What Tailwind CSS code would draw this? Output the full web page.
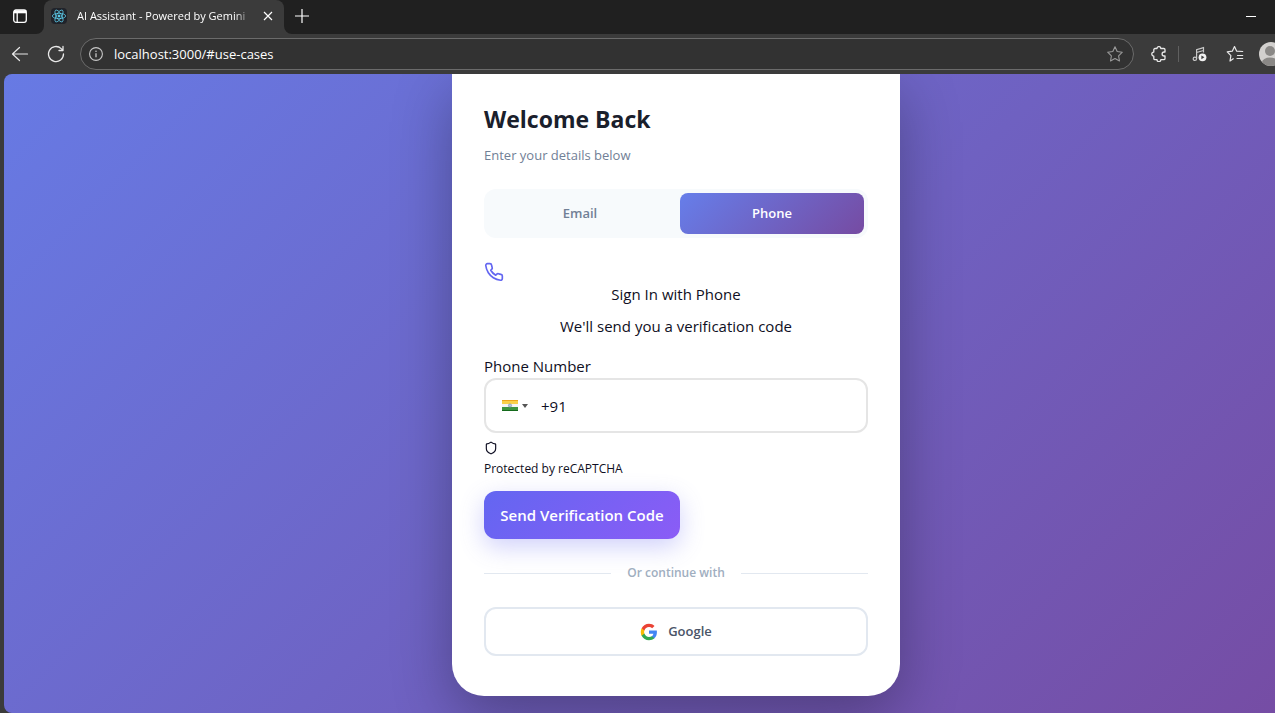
<!DOCTYPE html>
<html lang="en">

<head>
    <meta charset="UTF-8">
    <meta name="viewport" content="width=device-width, initial-scale=1.0">
    <title>AI Assistant - Powered by Gemini</title>
    <script src="https://cdn.jsdelivr.net/npm/@tailwindcss/browser@4"></script>
</head>

<body class="flex flex-col min-h-screen bg-[#3b3b3b] font-['Open_Sans','Noto_Sans',sans-serif]">

    <!-- Tab strip -->
    <header class="flex h-[34px] bg-[#202020] text-white">
        <button type="button" aria-label="Tab actions" class="w-11 flex items-center pl-3 pb-[2px] bg-[#202020]">
            <svg class="w-4 h-4" viewBox="0 0 16 16" fill="none" stroke="currentColor" stroke-width="1.3">
                <rect x="1.7" y="2" width="12.6" height="12.3" rx="2.2" />
                <path d="M2 3.8h12" stroke-width="3" />
                <path d="M5.2 4v10" />
            </svg>
        </button>
        <div class="relative w-60 flex items-center bg-[#3b3b3b] rounded-t-lg pl-[7px] pr-2 pb-[2px]">
            <span class="w-4 h-4 shrink-0 flex items-center justify-center bg-[#20232a] rounded-sm">
                <svg class="w-4 h-4" viewBox="0 0 24 24" fill="none" stroke="#61dafb" stroke-opacity=".8" stroke-width="1.3">
                    <circle cx="12" cy="12" r="1.6" fill="#61dafb" />
                    <ellipse cx="12" cy="12" rx="10" ry="4" />
                    <ellipse cx="12" cy="12" rx="10" ry="4" transform="rotate(60 12 12)" />
                    <ellipse cx="12" cy="12" rx="10" ry="4" transform="rotate(120 12 12)" />
                </svg>
            </span>
            <span class="ml-[10px] w-44 overflow-hidden whitespace-nowrap text-[11px] leading-4 mask-r-from-90%">AI Assistant - Powered by Gemini</span>
            <button type="button" aria-label="Close tab" class="w-4 h-4 ml-2 flex items-center justify-center">
                <svg class="w-[10px] h-[10px]" viewBox="0 0 10 10" stroke="currentColor" stroke-width="1.2">
                    <path d="M1 1l8 8M9 1L1 9" />
                </svg>
            </button>
            <svg class="absolute -left-2 bottom-0 w-2 h-2" viewBox="0 0 8 8" fill="#3b3b3b"><path d="M8 0v8H0a8 8 0 0 0 8-8z" /></svg>
            <svg class="absolute -right-2 bottom-0 w-2 h-2" viewBox="0 0 8 8" fill="#3b3b3b"><path d="M0 0v8h8a8 8 0 0 1-8-8z" /></svg>
        </div>
        <button type="button" aria-label="New tab" class="w-9 flex items-center justify-center pb-[2px]">
            <svg class="w-4 h-4" viewBox="0 0 16 16" stroke="currentColor" stroke-width="1.2">
                <path d="M8 1v14M1 8h14" />
            </svg>
        </button>
        <button type="button" aria-label="Minimize" class="ml-auto w-12 flex items-center justify-center pb-[2px]">
            <svg class="w-[10px] h-[10px]" viewBox="0 0 10 10" stroke="currentColor"><path d="M0 5.5h10" /></svg>
        </button>
    </header>

    <!-- Toolbar -->
    <nav class="flex items-center h-10 pl-1 overflow-hidden text-[#e8e8e8]">
        <button type="button" aria-label="Back" class="w-8 h-8 flex items-center justify-center">
            <svg class="w-[18px] h-[18px]" viewBox="0 0 18 18" fill="none" stroke="currentColor" stroke-width="1.2" stroke-linecap="round" stroke-linejoin="round">
                <path d="M8.500 2.500L1.500 9l7 6.500M1.500 9H16.500" />
            </svg>
        </button>
        <button type="button" aria-label="Refresh" class="w-8 h-8 ml-1 flex items-center justify-center">
            <svg class="w-[18px] h-[18px]" viewBox="0 0 18 18" fill="none" stroke="currentColor" stroke-width="1.3" stroke-linecap="round" stroke-linejoin="round">
                <path d="M16.500 9a7.500 7.500 0 1 1-2.300-5.400L16 5.400M16 1.500v4h-4" />
            </svg>
        </button>
        <div class="flex flex-1 items-center h-8 ml-2 pl-2 pr-[10px] rounded-full border border-[#6b6b6b] bg-[#323232]">
            <svg class="w-[14px] h-[14px] shrink-0" viewBox="0 0 14 14" fill="none" stroke="#c8c8c8" stroke-width="1.1">
                <circle cx="7" cy="7" r="6.400" />
                <path d="M7 6.200v4" stroke-width="1.300" />
                <circle cx="7" cy="4.200" r=".5" fill="#c8c8c8" stroke-width=".5" />
            </svg>
            <input type="text" aria-label="Address" value="localhost:3000/#use-cases" class="flex-1 ml-[11px] text-[13px] leading-5 text-white bg-transparent outline-none">
            <svg class="w-4 h-4 shrink-0" viewBox="0 0 16 16" fill="none" stroke="#9a9a9a" stroke-width="1.100" stroke-linejoin="round">
                <path d="M8 .8l2.200 4.700 5.100.7-3.700 3.600.9 5.200L8 12.500 3.500 15l.9-5.200L.7 6.200l5.100-.7z" />
            </svg>
        </div>
        <button type="button" aria-label="Extensions" class="w-8 h-8 ml-[9px] flex items-center justify-center">
            <svg class="w-4 h-4" viewBox="0 0 16 16" fill="none" stroke="currentColor" stroke-width="1.300" stroke-linejoin="round">
                <path d="M4 2.500H6a1.900 1.900 0 0 1 3.800 0H12.800a1.200 1.200 0 0 1 1.200 1.200V6h-.9a2 2 0 0 0 0 4h.9v2.500a1.200 1.200 0 0 1-1.200 1.200H9.800a1.900 1.900 0 0 1-3.800 0H4a1.200 1.200 0 0 1-1.200-1.200V10.100a2 2 0 0 1 0-4V3.700A1.200 1.200 0 0 1 4 2.500z" />
            </svg>
        </button>
        <span class="w-px h-4 mx-[3px] bg-[#606060]"></span>
        <button type="button" aria-label="Media controls" class="w-8 h-8 ml-[2px] flex items-center justify-center">
            <svg class="w-4 h-4" viewBox="0 0 16 16" fill="none" stroke="#c8c8c8" stroke-width="1.200">
                <circle cx="2.900" cy="12.800" r="1.700" />
                <path d="M4.600 12.800V3.600l6.900-2v5M4.600 6.500l6.900-2" />
                <circle cx="10.500" cy="11.300" r="3.900" fill="#f2f2f2" stroke="none" />
                <path d="M9.400 9.400v3.800l3-1.900z" fill="#3b3b3b" stroke="none" />
            </svg>
        </button>
        <button type="button" aria-label="Favorites" class="w-8 h-8 ml-[3px] flex items-center justify-center">
            <svg class="w-[18px] h-[18px]" viewBox="0 0 18 18" fill="none" stroke="currentColor" stroke-width="1.200" stroke-linejoin="round" stroke-linecap="round">
                <path d="M7.300 13.800L4 16l.9-5.400L1.200 6.900l5.100-.7 2.200-4.700 2.200 4.700 6 .3M11.500 10.500h5.200M11 13.500h5.700" />
            </svg>
        </button>
        <button type="button" aria-label="Profile" class="w-6 h-6 ml-2 -mr-2 shrink-0 rounded-full overflow-hidden">
            <svg class="w-6 h-6" viewBox="0 0 24 24">
                <rect width="24" height="24" fill="#d2d0ce" />
                <circle cx="11" cy="9" r="5" fill="#8a8886" />
                <ellipse cx="11" cy="20.500" rx="8" ry="5" fill="#8a8886" />
            </svg>
        </button>
    </nav>

    <!-- Sign in screen -->
    <main class="flex-1 ml-1 pl-[73px] rounded-l-lg overflow-hidden bg-[linear-gradient(135deg,#677ae4,#764ba2)] bg-size-[calc(100%+73px)_100%]">
        <section class="w-full max-w-md mx-auto mb-[17px] px-8 pt-[27px] pb-10 bg-white rounded-b-[32px] shadow-[0_20px_60px_rgba(0,0,0,0.3)] text-[#0f0f23]">
            <h1 class="text-[23px] leading-9 font-bold text-[#1a202c]">Welcome Back</h1>
            <p class="mt-2 text-[13px] leading-5 text-[#718096]">Enter your details below</p>

            <div class="grid grid-cols-2 gap-2 mt-6 p-1 rounded-xl bg-[#f7fafc] text-[13px] font-semibold">
                <button type="button" class="h-[41px] rounded-lg text-[#718096]">Email</button>
                <button type="button" class="h-[41px] rounded-lg text-white bg-[linear-gradient(135deg,#667eea,#764ba2)]">Phone</button>
            </div>

            <svg class="w-5 h-5 mt-6" viewBox="0 0 24 24" fill="none" stroke="#6366f1" stroke-width="2" stroke-linecap="round" stroke-linejoin="round">
                <path d="M22 16.920v3a2 2 0 0 1-2.180 2 19.790 19.790 0 0 1-8.630-3.070 19.500 19.500 0 0 1-6-6 19.790 19.790 0 0 1-3.070-8.670A2 2 0 0 1 4.110 2h3a2 2 0 0 1 2 1.720 12.840 12.840 0 0 0 .7 2.810 2 2 0 0 1-.45 2.110L8.090 9.910a16 16 0 0 0 6 6l1.270-1.270a2 2 0 0 1 2.110-.45 12.840 12.840 0 0 0 2.810.7A2 2 0 0 1 22 16.920z" />
            </svg>
            <h2 class="text-center text-[15px] leading-6">Sign In with Phone</h2>
            <p class="mt-2 text-center text-[15px] leading-6">We'll send you a verification code</p>

            <form>
                <label for="phone" class="block mt-4 text-[15px] leading-6">Phone Number</label>
                <div class="flex items-center h-[55px] px-4 border-2 border-[#e5e5e5] rounded-xl">
                    <button type="button" aria-label="Country: India" class="flex items-center gap-1">
                        <svg class="w-4 h-[11px]" viewBox="0 0 16 11">
                            <rect width="16" height="11" fill="#f4f4f4" />
                            <rect width="16" height="4" fill="#f8d04a" />
                            <rect width="16" height="1" fill="#eda61c" />
                            <rect y="7" width="16" height="4" fill="#3c9440" />
                            <rect y="10" width="16" height="1" fill="#146a1c" />
                            <circle cx="8" cy="5.500" r="1.600" fill="#b5c6d8" stroke="#7d91b0" stroke-width=".7" />
                        </svg>
                        <svg class="w-[6px] h-1" viewBox="0 0 6 4" fill="#555555"><path d="M0 0h6L3 4z" /></svg>
                    </button>
                    <input type="tel" id="phone" value="+91" class="flex-1 ml-[13px] text-[15px] leading-6 bg-transparent outline-none">
                </div>

                <svg class="w-[14px] h-[14px] mt-2" viewBox="0 0 24 24" fill="none" stroke="currentColor" stroke-width="2" stroke-linecap="round" stroke-linejoin="round">
                    <path d="M20 13c0 5-3.500 7.500-7.660 8.950a1 1 0 0 1-.67-.01C7.500 20.500 4 18 4 13V6a1 1 0 0 1 1-1c2 0 4.500-1.200 6.240-2.720a1.170 1.170 0 0 1 1.520 0C14.510 3.810 17 5 19 5a1 1 0 0 1 1 1z" />
                </svg>
                <p class="mt-1 text-xs leading-5">Protected by reCAPTCHA</p>

                <button type="submit" class="h-12 w-49 mt-3 rounded-xl text-[15px] font-semibold whitespace-nowrap text-white bg-[linear-gradient(135deg,#6366f1,#8b5cf6)] shadow-[0_8px_24px_rgba(99,102,241,0.3)]">Send Verification Code</button>
            </form>

            <div class="flex items-center gap-4 mt-6 text-xs leading-5 font-semibold text-[#a0aec0]">
                <span class="flex-1 h-px bg-[#e2e8f0]"></span>
                Or continue with
                <span class="flex-1 h-px bg-[#e2e8f0]"></span>
            </div>

            <button type="button" class="flex items-center justify-center gap-[10px] w-full h-[49px] mt-6 border-2 border-[#e2e8f0] rounded-xl text-[13px] font-semibold text-[#4a5568]">
                <svg class="w-[18px] h-[18px]" viewBox="0 0 24 24">
                    <path fill="#4285f4" d="M22.560 12.250c0-.78-.07-1.530-.2-2.250H12v4.260h5.920c-.26 1.370-1.040 2.530-2.210 3.310v2.770h3.570c2.080-1.920 3.280-4.740 3.280-8.090z" />
                    <path fill="#34a853" d="M12 23c2.970 0 5.460-.98 7.280-2.660l-3.570-2.770c-.98.66-2.230 1.060-3.710 1.060-2.860 0-5.290-1.930-6.160-4.530H2.180v2.840C3.990 20.530 7.700 23 12 23z" />
                    <path fill="#fbbc05" d="M5.840 14.090c-.22-.66-.35-1.360-.35-2.090s.13-1.430.35-2.090V7.070H2.180C1.430 8.550 1 10.220 1 12s.43 3.450 1.180 4.930l3.660-2.840z" />
                    <path fill="#ea4335" d="M12 5.380c1.620 0 3.060.56 4.210 1.640l3.150-3.150C17.450 2.090 14.970 1 12 1 7.700 1 3.990 3.470 2.180 7.070l3.660 2.840c.87-2.600 3.300-4.530 6.160-4.530z" />
                </svg>
                Google
            </button>
        </section>
    </main>
</body>

</html>
